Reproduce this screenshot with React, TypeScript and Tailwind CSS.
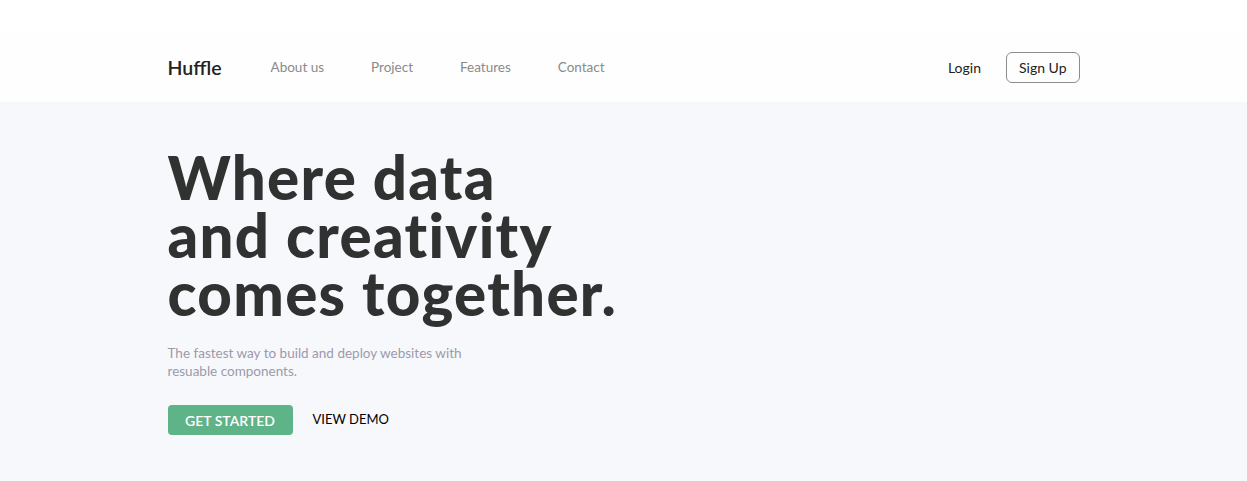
export default function App() {
  return (
    <div className="min-h-screen bg-[#f7f8fb] font-['Lato',sans-serif]">
      <div className="h-[33px] bg-white" />
      <header className="bg-[#fefefe]">
        <nav className="mx-auto flex h-[69px] max-w-[912px] items-center">
          <a className="text-[19.5px] font-semibold text-[#222]">Huffle</a>
          <ul className="ml-[49px] flex items-center gap-[47px] text-[13.5px] text-[#8a8a8a]">
            <li>About us</li>
            <li>Project</li>
            <li>Features</li>
            <li>Contact</li>
          </ul>
          <div className="ml-auto flex items-center gap-[25px] text-[14px] text-[#222]">
            <button>Login</button>
            <button className="h-[31px] rounded-[6px] border border-[#8c8c8c] px-[12px]">
              Sign Up
            </button>
          </div>
        </nav>
      </header>
      <main className="mx-auto max-w-[912px] pt-[46px]">
        <h1 className="font-['Lato_Black','Lato',sans-serif] text-[60px] leading-[58px] font-black tracking-[1.3px] text-[#303131]">
          Where data
          <br />
          and creativity
          <br />
          comes together.
        </h1>
        <p className="mt-[22px] w-[305px] text-[13.5px] leading-[18px] text-[#9c9aab]">
          The fastest way to build and deploy websites with resuable components.
        </p>
        <div className="mt-[25px] flex items-center gap-[20px]">
          <button className="h-[30px] w-[125px] rounded-[4px] bg-[#5fb388] text-[14px] font-semibold text-white">
            GET STARTED
          </button>
          <button className="text-[13px] text-black">VIEW DEMO</button>
        </div>
      </main>
    </div>
  );
}
